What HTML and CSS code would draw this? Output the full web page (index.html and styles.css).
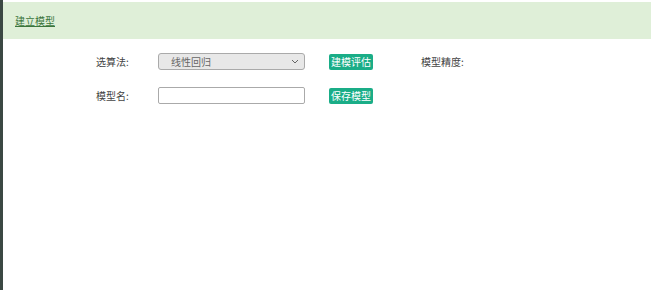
FILE: index.html
```html
<!DOCTYPE html>
<html lang="zh-CN">
<head>
    <meta charset="UTF-8">
    <title>建立模型</title>
    <link rel="stylesheet" href="styles.css">
</head>
<body>
    <div class="page">
        <div class="panel-head">
            <a class="panel-title" href="#">建立模型</a>
        </div>

        <div class="form">
            <div class="form-row">
                <label class="form-label">选算法:</label>
                <div class="select-box">
                    <span>线性回归</span>
                    <svg class="caret" width="8" height="5" viewBox="0 0 8 5"><path d="M1 1l3 3 3-3" fill="none" stroke="#666" stroke-width="1"/></svg>
                </div>
                <button class="btn">建模评估</button>
                <span class="form-label result">模型精度:</span>
            </div>
            <div class="form-row">
                <label class="form-label">模型名:</label>
                <input class="text-input" type="text">
                <button class="btn">保存模型</button>
            </div>
        </div>
    </div>
</body>
</html>
```

FILE: styles.css
```css
html, body {
    margin: 0;
    padding: 0;
    height: 100%;
}

body {
    font-family: "Noto Sans CJK SC", "Liberation Sans", sans-serif;
    background-color: #ffffff;
    border-left: 3px solid #3b4843;
    box-sizing: border-box;
}

.page {
    padding-top: 2px;
}

.panel-head {
    height: 37px;
    background-color: #dfefd8;
    display: flex;
    align-items: center;
    padding-left: 12px;
}

.panel-title {
    font-size: 10px;
    color: #3c763d;
    text-decoration: underline;
}

.form {
    padding: 14px 0 0 93px;
}

.form-row {
    display: flex;
    align-items: center;
    height: 17px;
    margin-bottom: 17px;
}

.form-label {
    width: 62px;
    font-size: 10px;
    color: #444;
}

.select-box {
    width: 128px;
    height: 15px;
    border: 1px solid #aaa;
    border-radius: 3px;
    background-color: #e8e8e8;
    display: flex;
    align-items: center;
    justify-content: space-between;
    padding: 0 5px 0 12px;
    box-sizing: content-box;
    margin-right: 24px;
    font-size: 10px;
    color: #666;
}

.text-input {
    width: 147px;
    height: 17px;
    border: 1px solid #aaa;
    border-radius: 2px;
    padding: 0;
    margin: 0 24px 0 0;
    box-sizing: border-box;
}

.btn {
    height: 16px;
    padding: 0 2px;
    border: none;
    border-radius: 2px;
    background-color: #1aad87;
    color: #fff;
    font-family: inherit;
    font-size: 10px;
    line-height: 16px;
}

.result {
    margin-left: 48px;
}
```
